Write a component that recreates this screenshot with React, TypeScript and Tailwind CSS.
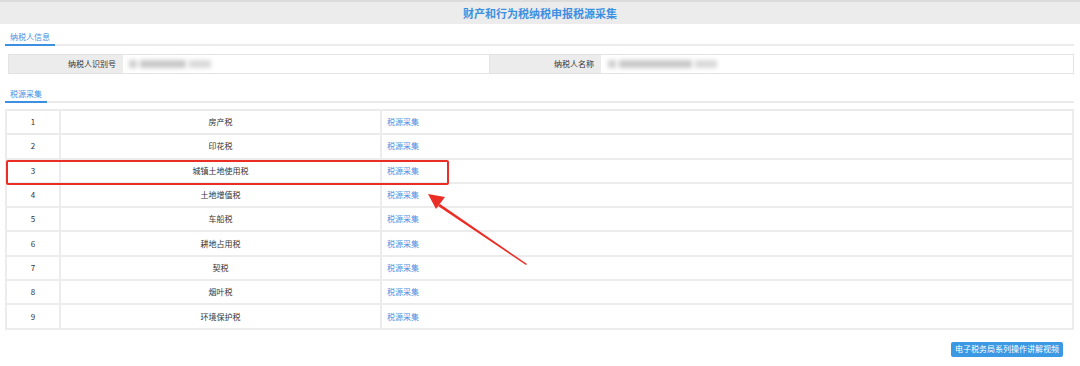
import React from "react";

const taxes = [
  "房产税",
  "印花税",
  "城镇土地使用税",
  "土地增值税",
  "车船税",
  "耕地占用税",
  "契税",
  "烟叶税",
  "环境保护税",
];

function Blurred({ width }: { width: number }) {
  return (
    <div className="flex items-center gap-[3px] blur-[2px]" style={{ width }}>
      <div className="h-[8px] w-[8px] bg-[#d0d0d0]" />
      <div className="h-[8px] flex-1 bg-[#c9c9c9]" />
      <div className="h-[8px] w-[22px] bg-[#dadada]" />
    </div>
  );
}

export default function App() {
  return (
    <div className="relative h-[366px] w-[1080px] overflow-hidden bg-white font-['Noto_Sans_CJK_SC','Liberation_Sans',sans-serif] text-[8px] text-[#333]">
      {/* title bar */}
      <div className="flex h-[24px] items-center justify-center border-t-2 border-[#dcdcdc] bg-[#ececec]">
        <h1 className="text-[11px] font-bold text-[#3d8fe2]">财产和行为税纳税申报税源采集</h1>
      </div>

      <div className="mr-[6px] ml-[5px]">
        {/* tab 1 */}
        <div className="mt-[6px] flex h-[16px] border-b-2 border-[#ececec]">
          <div className="-mb-[2px] border-b-2 border-[#3d8fe2] px-[5px] leading-[14px] text-[#4a90e2]">纳税人信息</div>
        </div>

        {/* taxpayer info */}
        <div className="mt-[8px] ml-[3px] flex h-[20px] border border-[#e3e3e3]">
          <div className="flex w-[114px] items-center justify-end bg-[#ececec] pr-[7px]">纳税人识别号</div>
          <div className="flex w-[366px] items-center pl-[6px]">
            <Blurred width={82} />
          </div>
          <div className="flex w-[112px] items-center justify-end border-l border-[#e3e3e3] bg-[#ececec] pr-[7px]">纳税人名称</div>
          <div className="flex flex-1 items-center pl-[7px]">
            <Blurred width={109} />
          </div>
        </div>

        {/* tab 2 */}
        <div className="mt-[12px] flex h-[17px] border-b-2 border-[#ececec]">
          <div className="-mb-[2px] border-b-2 border-[#3d8fe2] px-[5px] leading-[15px] text-[#4a90e2]">税源采集</div>
        </div>

        {/* table */}
        <table className="mt-[6px] w-full border-collapse">
          <tbody>
            {taxes.map((t, i) => (
              <tr key={t} className="h-[24.3px]">
                <td className="w-[54px] border-2 border-[#ececec] text-center">{i + 1}</td>
                <td className="w-[321px] border-2 border-[#ececec] text-center">{t}</td>
                <td className="border-2 border-[#ececec] pl-[5px] text-[#4a90e2]">税源采集</td>
              </tr>
            ))}
          </tbody>
        </table>

        <div className="mt-[12px] flex justify-end pr-[11px]">
          <button className="h-[15px] w-[112px] rounded-[2px] bg-[#3b98e3] text-[8px] whitespace-nowrap text-white">电子税务局系列操作讲解视频</button>
        </div>
      </div>

      {/* red highlight */}
      <div className="absolute top-[160px] left-[6px] h-[25px] w-[443px] rounded-[2px] border-2 border-[#ea2e26]" />

      {/* arrow */}
      <svg className="absolute top-0 left-0" width="1080" height="366" viewBox="0 0 1080 366">
        <polygon points="527,264 440,204 438,206 526,265" fill="#ea2e26" />
        <polygon points="428,194 445,197 436,209" fill="#ea2e26" />
      </svg>
    </div>
  );
}
